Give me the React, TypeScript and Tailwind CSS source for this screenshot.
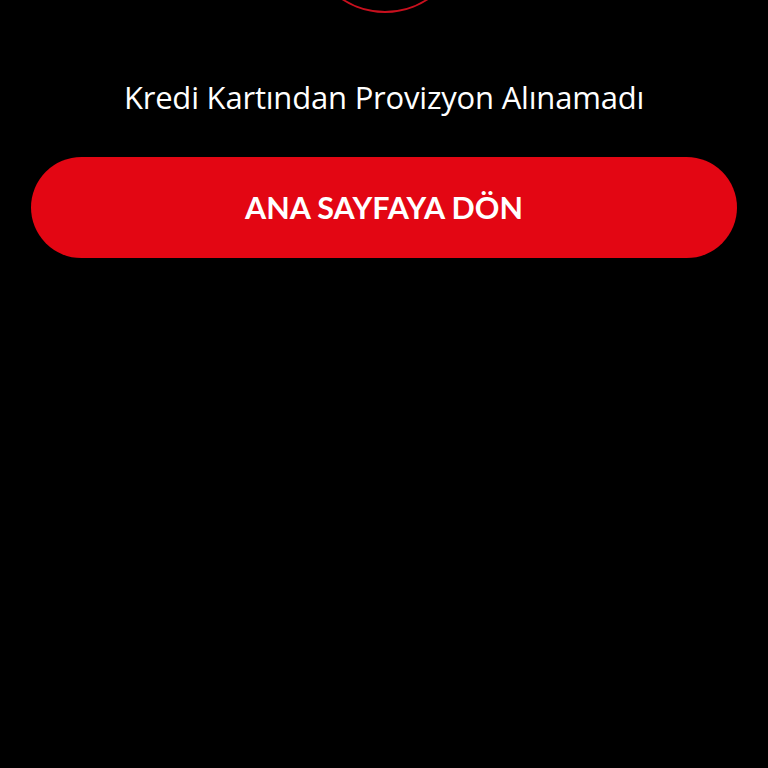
export default function App() {
  return (
    <div className="min-h-[768px] w-full overflow-hidden bg-black">
      <div className="flex flex-col items-center px-[31px]">
        <div className="mt-[-143px] h-[156px] w-[156px] shrink-0 rounded-full border-2 border-[#c8101e] ml-[2px]" />
        <p className="mt-[64px] text-center font-['Open_Sans',sans-serif] text-[31px] font-normal leading-[40px] tracking-[-0.2px] text-white">
          Kredi Kartından Provizyon Alınamadı
        </p>
        <button
          type="button"
          className="mt-[40px] flex h-[101px] w-full items-center justify-center rounded-full bg-[#e30613] font-['Lato',sans-serif] text-[30.5px] font-bold text-white"
        >
          ANA SAYFAYA DÖN
        </button>
      </div>
    </div>
  )
}
